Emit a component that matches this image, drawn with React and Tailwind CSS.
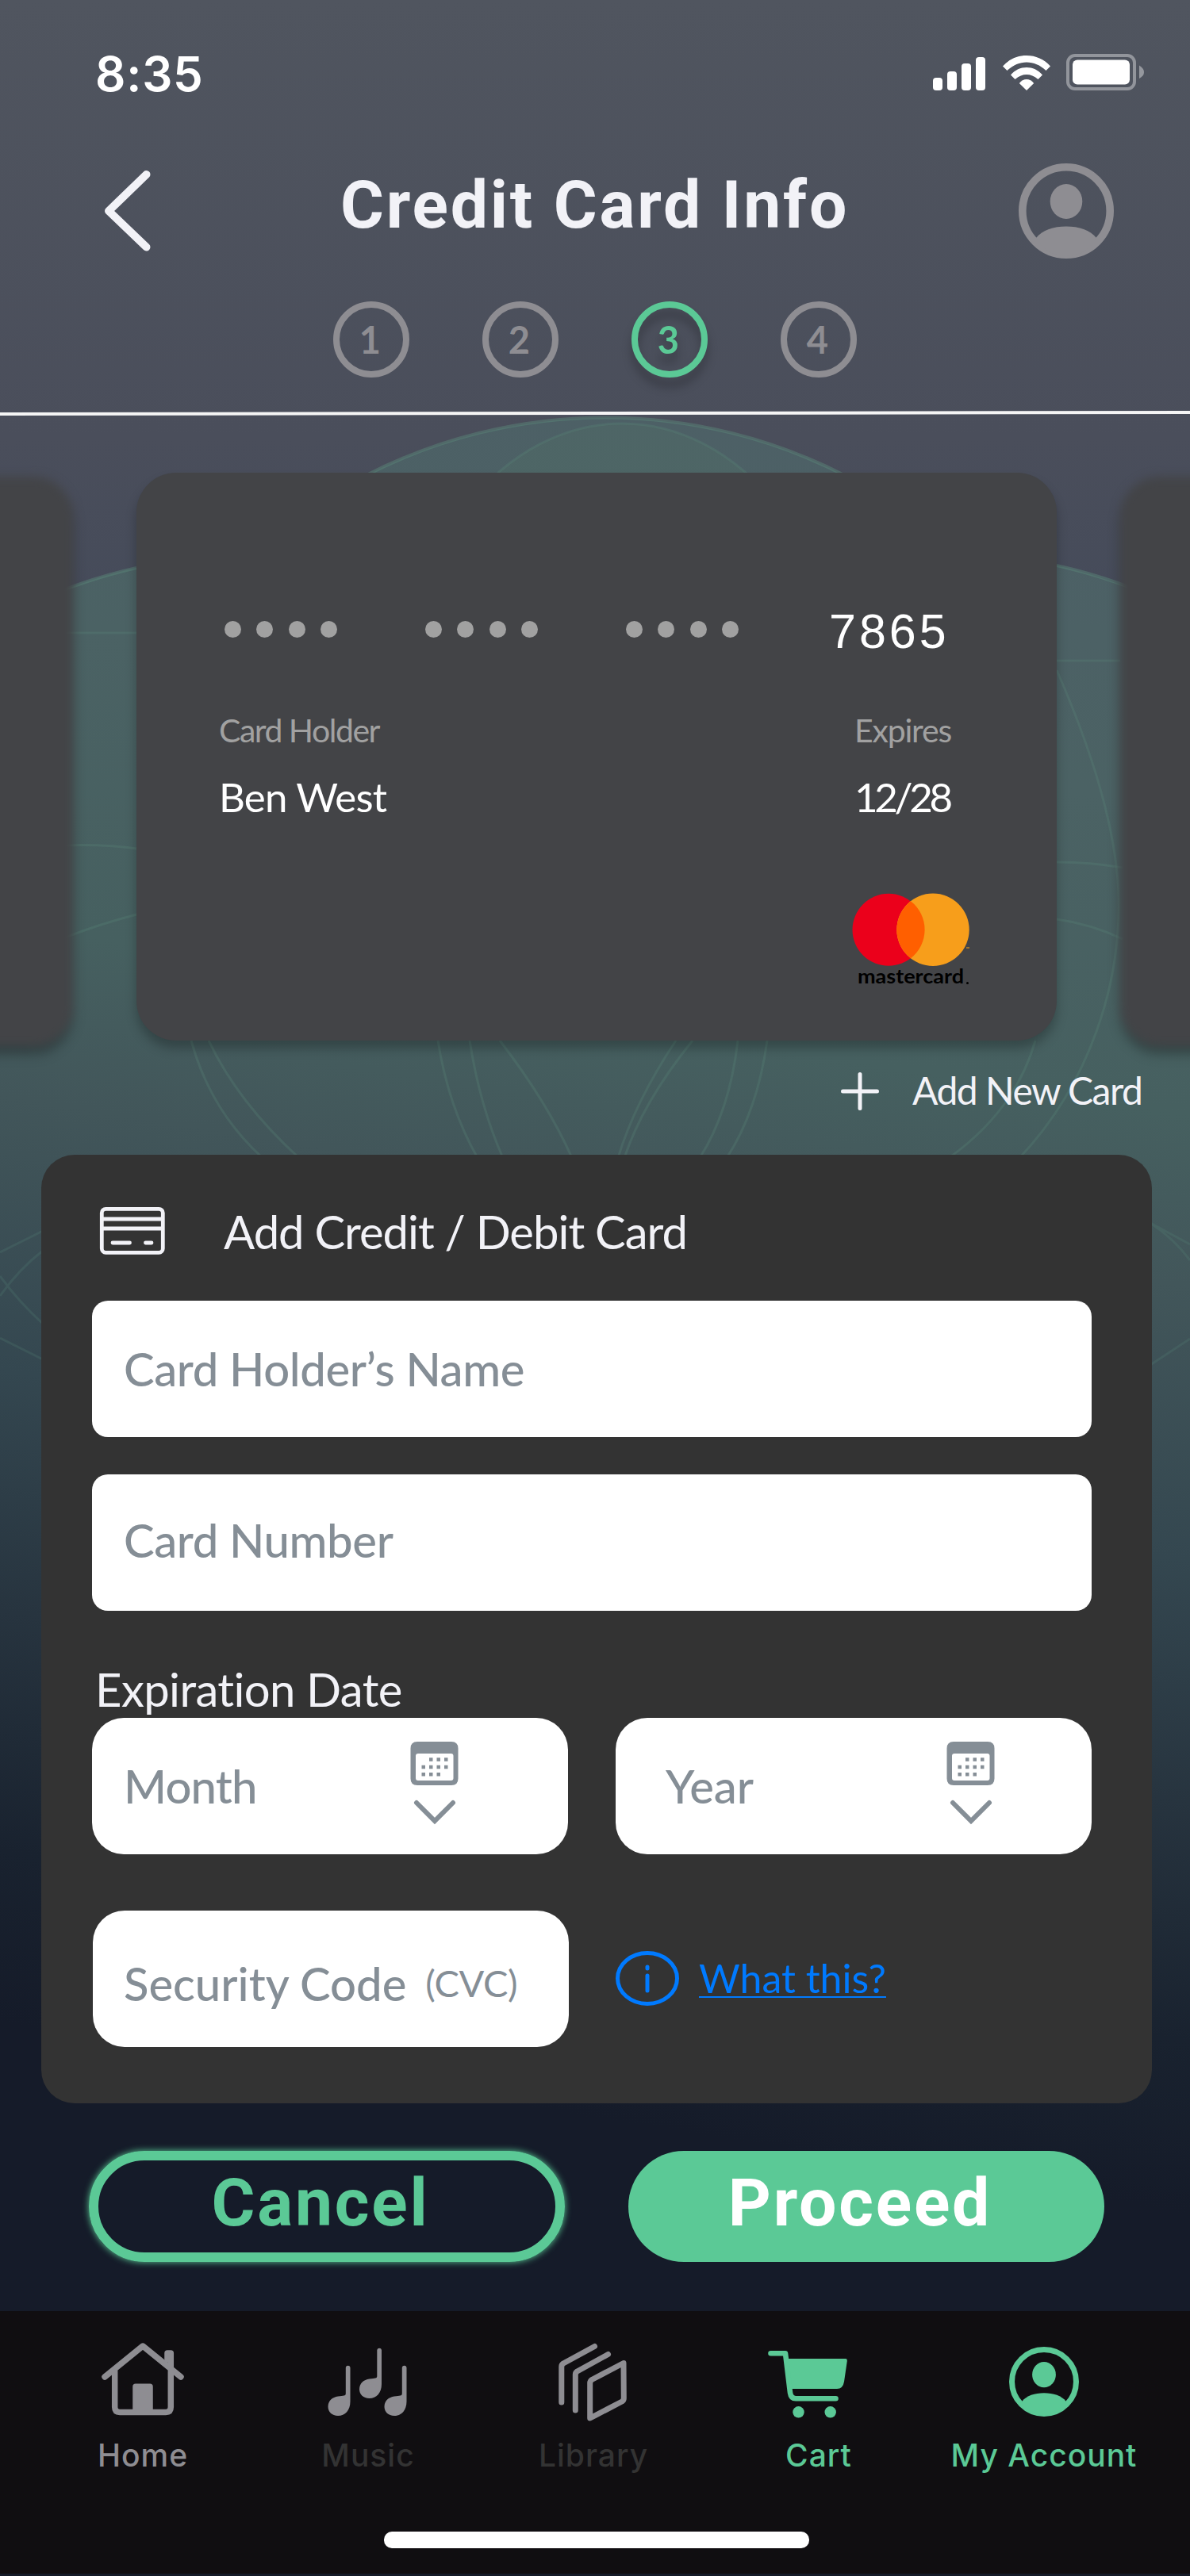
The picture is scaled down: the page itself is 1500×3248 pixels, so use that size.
import React from "react";

const TABS = [
  { id: "home", label: "Home", color: "text-[#8e8d92]" },
  { id: "music", label: "Music", color: "text-[#333333]" },
  { id: "library", label: "Library", color: "text-[#333333]" },
  { id: "cart", label: "Cart", color: "text-[#5bc996]" },
  { id: "account", label: "My Account", color: "text-[#5bc996]" },
];

function Backdrop() {
  return (
    <svg className="absolute inset-0" width="1500" height="3248" viewBox="0 0 1500 3248" fill="none">
      <defs>
        <linearGradient id="slate" x1="0" y1="0" x2="0" y2="1">
          <stop offset="0" stopColor="#50555f" />
          <stop offset="0.17" stopColor="#4a4e5b" />
          <stop offset="0.24" stopColor="#454b5a" />
          <stop offset="1" stopColor="#151b29" />
        </linearGradient>
        <linearGradient id="teal" gradientUnits="userSpaceOnUse" x1="900" y1="530" x2="560" y2="2640">
          <stop offset="0" stopColor="#4d6066" />
          <stop offset="0.18" stopColor="#4b6264" />
          <stop offset="0.36" stopColor="#466060" />
          <stop offset="0.46" stopColor="#42565a" />
          <stop offset="0.62" stopColor="#344750" />
          <stop offset="0.76" stopColor="#27343f" />
          <stop offset="0.9" stopColor="#19222f" />
          <stop offset="1" stopColor="#151b29" />
        </linearGradient>
      </defs>
      <rect width="1500" height="3248" fill="url(#slate)" />
      <g fill="url(#teal)">
        <circle cx="763" cy="1188" r="661" />
        <circle cx="320" cy="1360" r="661" />
        <circle cx="1183" cy="1357" r="661" />
        <rect y="1300" width="1500" height="1948" />
      </g>
      <ellipse cx="784" cy="900" rx="280" ry="366" fill="#4f6f68" fillOpacity="0.35" />
      <g stroke="#5a8a7b" strokeOpacity="0.45" strokeWidth="4">
        <path d="M458 601a661 661 0 0 1 610 0" />
        <path d="M0 781a661 661 0 0 1 172 -65M1332 713a661 661 0 0 1 168 62" />
      </g>
      <g stroke="#5a8a7b" strokeOpacity="0.25" strokeWidth="3">
        <ellipse cx="784" cy="900" rx="280" ry="366" />
        <path d="M80 798H172M1332 833H1412" />
        <path d="M80 1066Q130 1064 180 1071M1332 1087Q1375 1087 1415 1094" />
        <path d="M80 1183Q125 1165 176 1152M1332 1159Q1375 1165 1415 1184" />
        <path d="M241 1312Q265 1400 331 1460M263 1312Q300 1390 377 1460" />
        <path d="M552 1312Q565 1395 602 1460M592 1312Q605 1395 634 1460M630 1312Q690 1390 721 1460" />
        <path d="M852 1312Q800 1390 779 1460M873 1312Q810 1390 787 1460" />
        <path d="M930 1312Q920 1400 882 1460M967 1312Q955 1400 916 1460" />
        <path d="M1332 845Q1400 1000 1409 1110C1418 1240 1370 1370 1285 1460M1305 1312Q1280 1400 1196 1460" />
      </g>
      <g stroke="#5a8a7b" strokeOpacity="0.2" strokeWidth="3">
        <path d="M0 1579L54 1552M0 1634Q24 1600 54 1577M0 1609Q24 1642 54 1669M0 1687L54 1714" />
        <path d="M1450 1542L1500 1569M1450 1542Q1480 1562 1500 1589M1450 1721L1500 1688" />
      </g>
    </svg>
  );
}

function Avatar({ className }) {
  return (
    <svg viewBox="0 0 120 120" className={className} fill="currentColor">
      <circle cx="60" cy="60" r="55.2" fill="none" stroke="currentColor" strokeWidth="9.6" />
      <ellipse cx="60" cy="48" rx="20.3" ry="22" />
      <path d="M22 94C30 84 44 79.500 60 79.500S90 84 98 94C90 108 75 117 60 117S30 108 22 94Z" />
    </svg>
  );
}

function StatusBar() {
  return (
    <div className="flex h-[186px] justify-between pl-[120px] pr-[57px]">
      <div className="mt-[57px] font-['Inter'] text-[60px] leading-[72px] font-semibold tracking-[0.8px] text-white">8:35</div>
      <svg className="mt-[60px]" width="267" height="60" viewBox="1176 60 267 60" fill="white">
        <rect x="1176" y="98" width="12" height="16" rx="4" />
        <rect x="1194" y="90" width="12" height="24" rx="4" />
        <rect x="1212" y="80" width="12" height="34" rx="4" />
        <rect x="1230" y="72" width="12" height="42" rx="4" />
        <path d="M1294 70C1305.500 70 1316 74.500 1324 83.500L1318.500 89C1311 82 1303 78.500 1294 78.500S1277 82 1269.500 89L1264 83.500C1272 74.500 1282.500 70 1294 70Z" />
        <path d="M1294 85C1301.500 85 1308.500 88 1314 94.500L1308.500 100C1303.500 95.800 1299 94 1294 94S1284.500 95.800 1279.500 100L1274 94.500C1279.500 88 1286.500 85 1294 85Z" />
        <path d="M1294 100C1297.500 100 1300.500 101.800 1303.200 105L1294 114L1284.800 105C1287.500 101.800 1290.500 100 1294 100Z" />
        <rect x="1346" y="70" width="84" height="42" rx="9" fill="none" stroke="white" strokeOpacity="0.38" strokeWidth="4" />
        <rect x="1352" y="75.500" width="72" height="31" rx="6" />
        <path d="M1436 82.500C1440 85 1442 87.500 1442 91S1440 96.500 1436 99Z" fillOpacity="0.4" />
      </svg>
    </div>
  );
}

function Header() {
  return (
    <header className="flex h-[194px] items-start pr-24 pl-[127px] text-[#f2f2f7]">
      <svg className="mt-6" width="70" height="112" viewBox="127 210 70 112" fill="none" stroke="currentColor" strokeWidth="10" strokeLinecap="round" strokeLinejoin="round">
        <path d="M184.500 220L137 266L184.500 311.500" />
      </svg>
      <h1 className="mt-[23px] ml-[232px] font-['Roboto'] text-[84px] leading-[100px] font-bold tracking-[2.8px] whitespace-nowrap">Credit Card Info</h1>
      <Avatar className="mt-5 ml-auto h-[120px] w-[120px] text-[#8e8d92]" />
    </header>
  );
}

function Steps() {
  return (
    <div className="flex h-[138px] gap-[92px] pl-[420px]">
      {[1, 2, 3, 4].map((n) => (
        <div
          key={n}
          className={
            "flex h-24 w-24 items-center justify-center rounded-full border-8 pr-[3px] font-['Lato'] text-[47px] leading-none font-bold " +
            (n === 3 ? "border-[#5bc996] text-[#5bc996] drop-shadow-[0_12px_6px_rgba(0,0,0,0.25)]" : "border-[#8e8d92] text-[#8e8d92]")
          }
        >
          {n}
        </div>
      ))}
    </div>
  );
}

function Mastercard() {
  return (
    <svg width="150" height="122" viewBox="1074 1124 150 122">
      <circle cx="1120" cy="1172.300" r="45.500" fill="#eb001b" />
      <circle cx="1176" cy="1172.300" r="45.700" fill="#f79e1b" />
      <path d="M1148 1136.300a45.600 45.600 0 0 1 0 72a45.600 45.600 0 0 1 0 -72Z" fill="#ff5f00" />
      <text x="1081" y="1240" fontFamily="Lato" fontWeight="700" fontSize="24" textLength="134" lengthAdjust="spacingAndGlyphs" fill="black">mastercard</text>
      <circle cx="1219.500" cy="1239.500" r="1.500" fill="black" />
      <path d="M1218 1195h4" stroke="#f79e1b" strokeOpacity="0.7" strokeWidth="1.500" />
    </svg>
  );
}

function PaymentCard() {
  return (
    <div className="relative h-[716px] w-[1160px] shrink-0 rounded-[50px] bg-[#434447] px-[104px] pt-[167px] font-['Lato'] shadow-[0_10px_14px_rgba(0,0,0,0.25)]">
      <div className="flex h-[66px] items-center">
        {[0, 1, 2].map((g) => (
          <div key={g} className="mr-[110px] mb-[5px] flex w-[143px] gap-[19.300px] pl-[7px]">
            {[0, 1, 2, 3].map((d) => (
              <i key={d} className="h-[21px] w-[21px] shrink-0 rounded-full bg-[#a1a1a1]" />
            ))}
          </div>
        ))}
        <span className="ml-[10px] font-['Liberation_Sans'] text-[61px] leading-[66px] tracking-[4px] text-white">7865</span>
      </div>
      <div className="mt-[62px] flex justify-between text-[41px] leading-[60px] text-[#a1a1a1]">
        <span className="tracking-[-1.500px]">Card Holder</span>
        <span className="mr-[26px] w-[125px] tracking-[-1.200px] whitespace-nowrap">Expires</span>
      </div>
      <div className="mt-[21px] flex justify-between text-[51px] leading-[66px] text-white">
        <span className="tracking-[-0.8px]">Ben West</span>
        <span className="mr-[26px] w-[125px] tracking-[-4.300px] whitespace-nowrap">12/28</span>
      </div>
      <div className="mt-[86px] ml-[798px]">
        <Mastercard />
      </div>
    </div>
  );
}

function SideCard() {
  return <div className="mt-[5px] h-[718px] w-[1160px] shrink-0 rounded-[50px] bg-[#434447] shadow-[0_10px_10px_rgba(0,0,0,0.3)] blur-[6px]" />;
}

function Carousel() {
  return (
    <div className="flex h-[716px] justify-center gap-20">
      <SideCard />
      <PaymentCard />
      <SideCard />
    </div>
  );
}

function DateField({ label, className }) {
  return (
    <div className="flex h-[172px] w-[600px] rounded-[40px] bg-white text-[#858e96]">
      <span className={className}>{label}</span>
      <svg className="mt-[28px]" width="64" height="110" viewBox="516 2194 64 110" fill="none">
        <path d="M526 2196h43q8.500 0 8.500 8.500v38q0 8.500 -8.500 8.500h-43q-8.500 0 -8.500 -8.500v-38q0 -8.500 8.500 -8.500ZM527 2211q-3 0 -3 3v28q0 3 3 3h41.500q3 0 3 -3v-28q0 -3 -3 -3Z" fill="currentColor" fillRule="evenodd" />
        <path d="M541 2218.500h4.500M550.500 2218.500h4.500M560 2218.500h4.500M531.500 2228h4.500M541 2228h4.500M550.500 2228h4.500M560 2228h4.500M531.500 2237.300h4.500M541 2237.300h4.500M550.500 2237.300h4.500" stroke="currentColor" strokeWidth="4.500" />
        <path d="M525 2273L548 2296L571 2273" stroke="currentColor" strokeWidth="6" strokeLinecap="round" />
      </svg>
    </div>
  );
}

function CardForm() {
  const label = "font-['Lato'] font-medium tracking-[-0.400px] whitespace-nowrap";
  return (
    <section className="ml-[52px] h-[1196px] w-[1400px] rounded-[42px] bg-[#333333] pl-16 font-['Lato']">
      <div className="flex h-[184px] items-start">
        <svg className="mt-[64px] ml-[8px]" width="86" height="64" viewBox="124 1520 86 64" fill="none" stroke="#f2f2f7" strokeWidth="4.800">
          <rect x="128.300" y="1524.300" width="77" height="55" rx="5" />
          <path d="M128 1537H205M128 1549H205" />
          <path d="M142 1567H163.500M183.500 1567H191" strokeLinecap="round" />
        </svg>
        <h2 className="mt-[61px] ml-[72px] text-[58px] leading-[72px] tracking-[-1px] text-[#f2f2f7]">Add Credit / Debit Card</h2>
      </div>
      <div className="flex h-[172px] w-[1260px] items-center rounded-[20px] bg-white pb-px pl-[40px] text-[58px] text-[#858e96]">
        <span className={label}>Card Holder’s Name</span>
      </div>
      <div className="mt-[47px] flex h-[172px] w-[1260px] items-center rounded-[20px] bg-white pb-[8px] pl-[40px] text-[58px] text-[#858e96]">
        <span className={label}>Card Number</span>
      </div>
      <div className="flex h-[135px] items-end pl-1 text-[58px] leading-[72px] text-[#f2f2f7]">
        <span className="tracking-[-0.600px]">Expiration Date</span>
      </div>
      <div className="relative flex gap-[60px]">
        <DateField label="Month" className="mt-[50px] w-[400px] pl-[40px] text-[58px] leading-[72px] font-medium tracking-[-0.800px]" />
        <DateField label="Year" className="mt-[50px] w-[416px] pl-[63px] text-[58px] leading-[72px] font-medium" />
      </div>
      <div className="mt-[71px] ml-px flex">
        <div className="flex h-[172px] w-[600px] items-start rounded-[40px] bg-white pt-[56px] pl-[39px] text-[#858e96]">
          <span className="text-[58px] leading-[72px] font-medium whitespace-nowrap">Security Code</span>
          <span className="ml-[24px] text-[47px] leading-[70px] tracking-[-0.400px]">(CVC)</span>
        </div>
        <svg className="mt-[50px] ml-[58px]" width="82" height="72" viewBox="775 2459 82 72" fill="none" stroke="#007aff" strokeLinecap="round">
          <ellipse cx="816" cy="2494.500" rx="37.500" ry="32" strokeWidth="5" />
          <path d="M816 2480V2482M816 2491V2510" strokeWidth="5" />
        </svg>
        <a className="mt-[52px] ml-[24px] text-[50px] leading-[66px] text-[#007aff] underline decoration-2 underline-offset-[4px] [text-decoration-skip-ink:none]">What this?</a>
      </div>
    </section>
  );
}

function TabIcon({ id }) {
  if (id === "account") return <Avatar className="mt-[9px] h-[88px] w-[88px] text-[#5bc996]" />;
  if (id === "home")
    return (
      <svg width="110" height="110" viewBox="125 2950 110 110" fill="none" stroke="#8e8d92" strokeWidth="7.500" strokeLinecap="round" strokeLinejoin="round">
        <path d="M132 2997L180 2958L228 2997" />
        <path d="M144.700 2990V3035Q144.700 3041.500 151 3041.500H209Q215.300 3041.500 215.300 3035V2990" />
        <path d="M211 2975V2967H215.300V2985" />
        <path d="M171 3009.300H189V3040H171Z" fill="#8e8d92" />
      </svg>
    );
  if (id === "music")
    return (
      <svg width="110" height="110" viewBox="410 2950 110 110" fill="#8e8d92">
        {[[0, 0], [71, 0], [39.5, -22]].map(([x, y]) => (
          <path key={x} transform={`translate(${x} ${y})`} d="M436.800 2985a2.900 2.900 0 0 1 5.700 0V3028C442.500 3039 436 3046 427 3046C419.500 3046 414.500 3041 414.500 3034.500C414.500 3027 420 3022.500 427 3021.500C434 3020.500 436.800 3021 436.800 3018Z" />
        ))}
      </svg>
    );
  if (id === "library")
    return (
      <svg width="110" height="110" viewBox="694 2950 110 110" fill="none" stroke="#8e8d92" strokeWidth="7" strokeLinecap="round" strokeLinejoin="round">
        <path d="M750.500 2958.500L711 2980Q708.800 2981.500 708.800 2984V3029" />
        <path d="M767.500 2968.500L728.500 2990Q726.300 2991.500 726.300 2994V3039" />
        <path d="M787 2979.500L747 3000.500Q744.700 3002 744.700 3005V3049L785 3028Q787.300 3026.500 787.300 3024Z" />
      </svg>
    );
  return (
    <svg width="110" height="110" viewBox="978 2950 110 110" fill="#5bc996" className="overflow-visible">
      <path d="M993 2974H1067Q1069 2974 1068.800 2977L1065 3003Q1063.500 3012 1056 3012H997Z" />
      <path d="M972.500 2967.300H991L997 3017Q998 3024.300 1004 3024.300H1054.500" fill="none" stroke="#5bc996" strokeWidth="6.600" strokeLinecap="round" strokeLinejoin="round" />
      <circle cx="1007.500" cy="3041.300" r="7.200" />
      <circle cx="1047.700" cy="3041.300" r="7.200" />
    </svg>
  );
}

function TabBar() {
  return (
    <nav className="h-[331px] bg-[#100e11]">
      <div className="flex pt-9 pl-[38px]">
        {TABS.map((t) => (
          <div key={t.id} className="flex w-[284px] flex-col items-center">
            <div className="flex h-[122px] items-start">
              <TabIcon id={t.id} />
            </div>
            <span className={"font-['Inter'] text-[39px] leading-[48px] font-medium tracking-[1px] whitespace-nowrap " + t.color}>{t.label}</span>
          </div>
        ))}
      </div>
      <div className="mt-[72px] ml-[484px] h-[21px] w-[536px] rounded-[10px] bg-white" />
    </nav>
  );
}

export default function App() {
  return (
    <main className="relative h-[3248px] w-[1500px] overflow-hidden bg-[#151b29]">
      <Backdrop />
      <div className="relative">
        <StatusBar />
        <Header />
        <Steps />
        <svg className="block" width="1500" height="8" viewBox="0 0 1500 8">
          <path d="M0 4L1500 2" stroke="#f5f5f5" strokeWidth="4" />
        </svg>
        <div className="mt-[70px] ml-[4px]">
          <Carousel />
        </div>
        <div className="flex h-[144px] items-start pl-[1058px] text-[#f2f2f7]">
          <svg className="mt-[38px]" width="52" height="52" viewBox="0 0 52 52" stroke="currentColor" strokeWidth="5" strokeLinecap="round">
            <path d="M26 4.500V47.500M4.500 26H47.500" />
          </svg>
          <span className="mt-[31px] ml-10 font-['Lato'] text-[48px] leading-[64px] tracking-[-1.500px] whitespace-nowrap">Add New Card</span>
        </div>
        <CardForm />
        <div className="flex h-[262px] gap-20 pt-[60px] pl-28 font-['Roboto'] text-[84px] leading-none font-bold tracking-[2.800px]">
          <button className="flex h-[140px] w-[600px] items-start justify-center rounded-full border-[12px] border-[#5bc996] pt-[12px] pr-[16px] text-[#5bc996] shadow-[0_0_8px_#5bc996]">Cancel</button>
          <button className="flex h-[140px] w-[600px] items-start justify-center rounded-full bg-[#5bc996] pt-[24px] pr-[16px] text-white">Proceed</button>
        </div>
        <TabBar />
      </div>
    </main>
  );
}
